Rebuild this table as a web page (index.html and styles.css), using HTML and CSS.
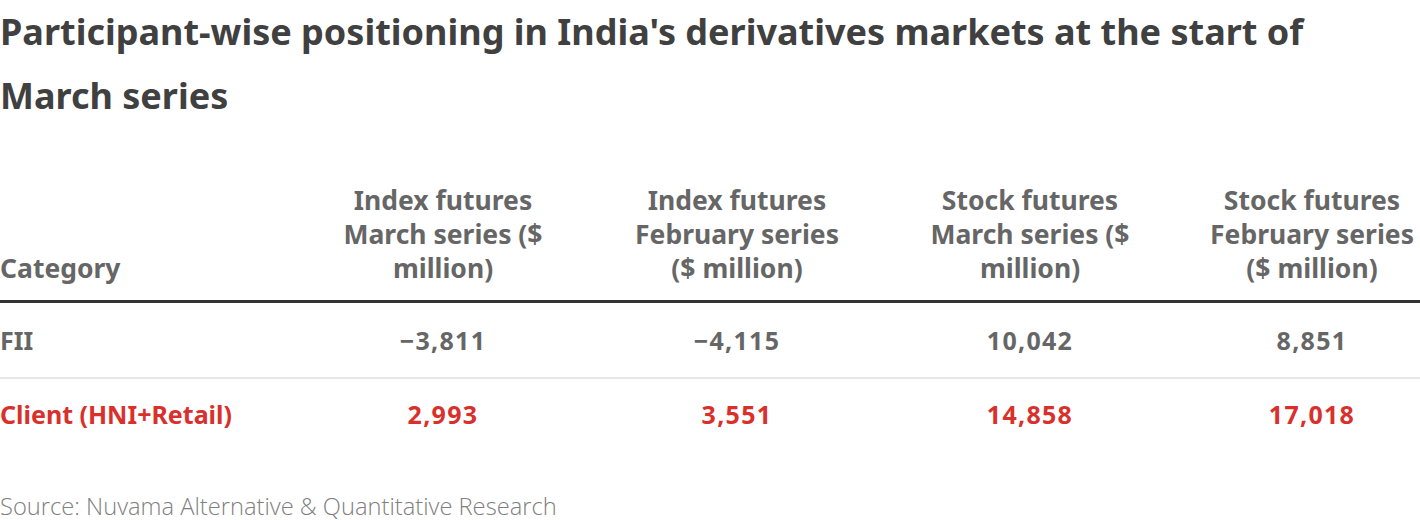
FILE: index.html
```html
<!DOCTYPE html>
<html>
<head>
<meta charset="utf-8">
<link rel="stylesheet" href="styles.css">
</head>
<body>
<div class="chart">
  <h1 class="title">Participant-wise positioning in India's derivatives markets at the start of<br>March series</h1>
  <div class="table">
    <div class="row head">
      <div class="cell first">Category</div>
      <div class="cell">Index futures<br>March series ($<br>million)</div>
      <div class="cell">Index futures<br>February series<br>($ million)</div>
      <div class="cell">Stock futures<br>March series ($<br>million)</div>
      <div class="cell">Stock futures<br>February series<br>($ million)</div>
    </div>
    <div class="row body">
      <div class="cell first">FII</div>
      <div class="cell num">−3,811</div>
      <div class="cell num">−4,115</div>
      <div class="cell num">10,042</div>
      <div class="cell num">8,851</div>
    </div>
    <div class="row body red last">
      <div class="cell first">Client (HNI+Retail)</div>
      <div class="cell num">2,993</div>
      <div class="cell num">3,551</div>
      <div class="cell num">14,858</div>
      <div class="cell num">17,018</div>
    </div>
  </div>
  <div class="source">Source: Nuvama Alternative &amp; Quantitative Research</div>
</div>
</body>
</html>
```
FILE: styles.css
```css
html, body {
  margin: 0;
  padding: 0;
  background: #ffffff;
}
.chart {
  width: 1420px;
  font-family: "Noto Sans", "Open Sans", sans-serif;
}
.title {
  margin: 0;
  font-size: 36px;
  line-height: 64px;
  font-weight: 700;
  color: #404040;
  white-space: nowrap;
}
.table {
  margin-top: 55px;
}
.row {
  display: grid;
  grid-template-columns: 268px 350px 238px 348px 216px;
  align-items: end;
}
.cell {
  text-align: center;
  white-space: nowrap;
}
.cell.first {
  text-align: left;
}
.num {
  letter-spacing: 1.3px;
}
.head {
  font-size: 26.5px;
  line-height: 34px;
  font-weight: 700;
  color: #666666;
  padding-bottom: 15px;
  border-bottom: 3px solid #333333;
}
.body {
  font-size: 25px;
  line-height: 74px;
  font-weight: 700;
  color: #666666;
  border-bottom: 2px solid #e6e6e6;
}
.body.last {
  line-height: 70px;
  border-bottom: none;
}
.red {
  color: #d9302c;
}
.source {
  margin-top: 42px;
  font-family: "Open Sans", "Noto Sans", sans-serif;
  font-size: 23.7px;
  line-height: 30px;
  font-weight: 300;
  color: #808080;
}
```
